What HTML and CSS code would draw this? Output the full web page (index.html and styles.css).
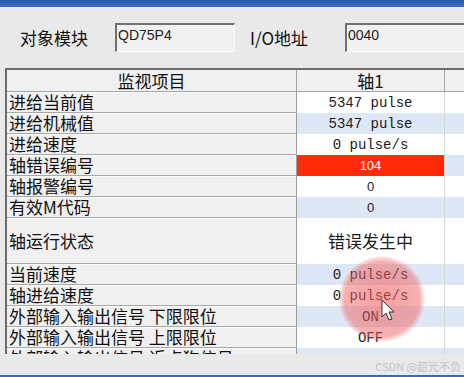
FILE: index.html
```html
<!DOCTYPE html>
<html>
<head>
  <meta charset="UTF-8">
  <title>监视</title>
  <link rel="stylesheet" href="styles.css">
</head>
<body>
<div class="window">
  <div class="titlebar"></div>
  <div class="target">
    <span class="label">对象模块</span>
    <div class="field field_module">QD75P4</div>
    <span class="label label_io">I/O地址</span>
    <div class="field field_io">0040</div>
  </div>
  <div class="monitor">
    <table class="grid">
      <colgroup>
        <col class="c_name">
        <col class="c_axis">
        <col class="c_rest">
      </colgroup>
      <thead>
        <tr><th>监视项目</th><th class="axis">轴1</th><th class="rest"></th></tr>
      </thead>
      <tbody>
        <tr><td class="name">进给当前值</td><td class="val">5347 pulse</td><td class="rest"></td></tr>
        <tr><td class="name">进给机械值</td><td class="val">5347 pulse</td><td class="rest"></td></tr>
        <tr><td class="name">进给速度</td><td class="val">0 pulse/s</td><td class="rest"></td></tr>
        <tr><td class="name">轴错误编号</td><td class="val err">104</td><td class="rest"></td></tr>
        <tr><td class="name">轴报警编号</td><td class="val num">0</td><td class="rest"></td></tr>
        <tr><td class="name">有效M代码</td><td class="val num">0</td><td class="rest"></td></tr>
        <tr class="tall"><td class="name">轴运行状态</td><td class="val cjk">错误发生中</td><td class="rest"></td></tr>
        <tr><td class="name">当前速度</td><td class="val">0 pulse/s</td><td class="rest"></td></tr>
        <tr><td class="name">轴进给速度</td><td class="val">0 pulse/s</td><td class="rest"></td></tr>
        <tr><td class="name">外部输入输出信号 下限限位</td><td class="val">ON</td><td class="rest"></td></tr>
        <tr><td class="name">外部输入输出信号 上限限位</td><td class="val">OFF</td><td class="rest"></td></tr>
        <tr><td class="name">外部输入输出信号 近点狗信号</td><td class="val"></td><td class="rest"></td></tr>
      </tbody>
    </table>
  </div>
  <div class="status">CSDN @韶光不负</div>
  <div class="taskbar"></div>

  <!-- 鼠标点击高亮 -->
  <div class="spot"></div>
  <svg class="cursor" width="16" height="24" viewBox="0 0 16 24">
    <path d="M1 1 L1 18 L5 14 L8 21 L11 20 L8 13 L13 13 Z" fill="#fff" stroke="#333" stroke-width="1" stroke-linejoin="round"/>
  </svg>
</div>
</body>
</html>
```

FILE: styles.css
```css
* {
  margin: 0;
  padding: 0;
  box-sizing: border-box;
}
body {
  width: 464px;
  height: 377px;
  overflow: hidden;
  background: #e9e9e9;
  font-family: "Noto Sans CJK SC", "Liberation Sans", sans-serif;
  color: #111;
}
.window {
  position: relative;
  width: 464px;
  height: 377px;
  overflow: hidden;
}
.titlebar {
  height: 7px;
  background: linear-gradient(to bottom, #2a56b0, #3b6cc4);
}
.target {
  display: flex;
  align-items: center;
  height: 29px;
  margin-top: 16px;
  margin-bottom: 16px;
}
.target .label {
  flex-shrink: 0;
  font-size: 17px;
  line-height: 29px;
  margin-left: 20px;
  width: 95px;
}
.target .label_io {
  margin-left: 15px;
}
.field {
  flex-shrink: 0;
  height: 29px;
  background: #f1f1f1;
  border-top: 2px solid #707070;
  border-left: 2px solid #707070;
  border-right: 1px solid #fafafa;
  border-bottom: 1px solid #fafafa;
  font-family: "Liberation Sans", sans-serif;
  font-size: 14px;
  line-height: 14px;
  padding: 3px 0 0 1px;
  color: #222;
}
.field_module {
  width: 120px;
}
.field_io {
  width: 140px;
}
.monitor {
  height: 286px;
  margin-left: 5px;
  border-top: 2px solid #6c6c6c;
  border-left: 2px solid #6c6c6c;
  overflow: hidden;
}
.grid {
  border-collapse: separate;
  border-spacing: 0;
  table-layout: fixed;
  width: 470px;
}
.grid .c_name {
  width: 290px;
}
.grid .c_axis {
  width: 148px;
}
.grid th {
  height: 22px;
  font-size: 17px;
  font-weight: normal;
  line-height: 21px;
  background: #f0f0f0;
  border-bottom: 1px solid #a4a4a4;
  border-right: 1px solid #a4a4a4;
  text-align: center;
}
.grid th.rest {
  border-right: none;
}
.grid td {
  height: 21px;
  line-height: 20px;
  white-space: nowrap;
  background: #fff;
}
.grid td.name {
  font-size: 17px;
  padding-left: 2px;
  background: #f0f0f0;
  border-bottom: 1px solid #a8a8a8;
  border-right: 1px solid #9c9c9c;
  box-shadow: inset 0 1px 0 #fbfbfb;
  text-align: left;
}
.grid td.val {
  text-align: center;
  font-family: "Liberation Mono", monospace;
  font-size: 14px;
  border-right: 1px solid #d8d8d8;
  color: #1a1a1a;
}
.grid td.num {
  font-family: "Liberation Sans", sans-serif;
  font-size: 13px;
}
.grid td.cjk {
  font-family: "Noto Sans CJK SC", sans-serif;
  font-size: 17px;
}
.grid tbody tr:nth-child(even) td.val,
.grid tbody tr:nth-child(even) td.rest {
  background: #dee7f6;
}
.grid td.err,
.grid tbody tr:nth-child(even) td.err {
  background: #ff2a08;
  color: #fff;
  font-family: "Liberation Sans", sans-serif;
  font-size: 13px;
}
.grid tr.tall td {
  height: 46px;
}
.status {
  height: 21px;
  text-align: right;
  padding-right: 3px;
  font-size: 11px;
  line-height: 18px;
  padding-top: 3px;
  color: #c4c4c4;
}
.taskbar {
  height: 2px;
  background: #2f6cc0;
}
.spot {
  position: absolute;
  left: 339px;
  top: 256px;
  width: 86px;
  height: 86px;
  border-radius: 50%;
  background: radial-gradient(circle, rgba(238, 96, 96, 0.6) 0%, rgba(238, 100, 100, 0.5) 62%, rgba(238, 110, 110, 0) 72%);
}
.cursor {
  position: absolute;
  left: 381px;
  top: 299px;
}
```
